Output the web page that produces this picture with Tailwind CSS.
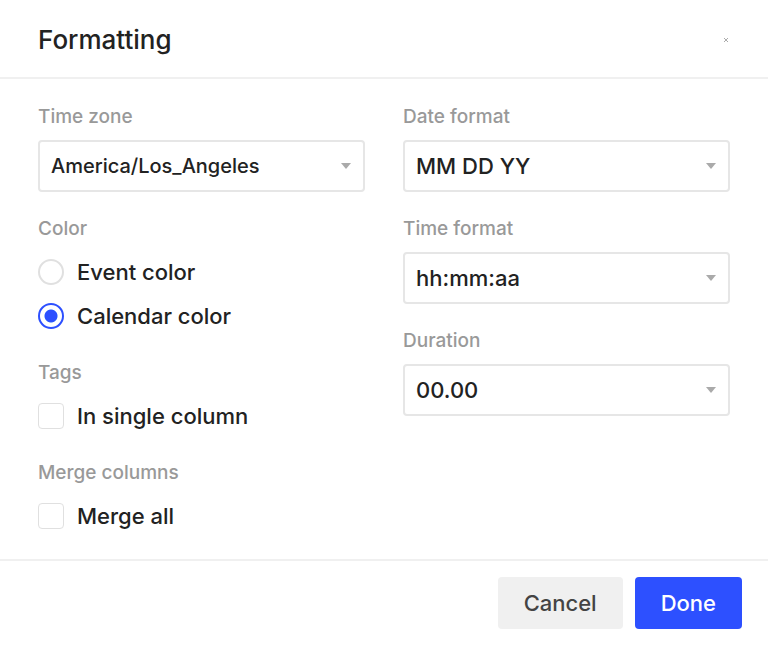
<!DOCTYPE html>
<html lang="en" class="bg-white">
<head>
  <meta charset="UTF-8" />
  <meta name="viewport" content="width=device-width, initial-scale=1" />
  <title>Formatting</title>
  <script src="https://cdn.jsdelivr.net/npm/@tailwindcss/browser@4"></script>
</head>
<body class="bg-white font-['Inter',sans-serif] font-medium text-[#222222]">

  <form id="formattingForm">
    <header class="flex items-center justify-between h-[79px] pt-[2px] px-[38px] border-b-2 border-[#f0f0f0]">
      <h1 class="text-[26px] leading-8 font-medium">Formatting</h1>
      <button type="button" aria-label="Close" class="flex items-center justify-center w-2 h-8">
        <svg class="w-2 h-2" viewBox="0 0 8 8" fill="none" stroke="#aaaaaa" stroke-width="1">
          <path d="M2 2l4 4M6 2l-4 4" />
        </svg>
      </button>
    </header>

    <div class="grid grid-cols-2 gap-[38px] px-[38px] pt-[23px] pb-[30px]">
      <div>
        <label for="timezone" class="block text-[19px] leading-[30px] text-[#999999]">Time zone</label>
        <div class="relative mt-2 mb-[22px]">
          <select id="timezone" name="timezone"
                  class="block w-full h-[52px] px-[11px] appearance-none bg-white border-2 border-[#e6e6e6] rounded-sm text-[20px]">
            <option>America/Los_Angeles</option>
          </select>
          <svg class="absolute right-[14px] top-[23px] w-[10px] h-[6px] pointer-events-none" viewBox="0 0 10 6" fill="#aaaaaa">
            <path d="M0 0h10L5 6z" />
          </svg>
        </div>

        <fieldset class="mb-[29px]">
          <legend class="text-[19px] leading-[30px] text-[#999999] mb-[15px]">Color</legend>
          <div class="space-y-[18px]">
            <label class="flex items-center gap-[13px] text-[22px] leading-[26px]">
              <input type="radio" name="color" value="event"
                     class="w-[26px] h-[26px] appearance-none rounded-full border-2 border-[#e0e0e0] checked:border-[#2d50ff] checked:bg-radial checked:from-[#2d50ff] checked:from-[6px] checked:to-white checked:to-[7px]" />
              Event color
            </label>
            <label class="flex items-center gap-[13px] text-[22px] leading-[26px]">
              <input type="radio" name="color" value="calendar" checked
                     class="w-[26px] h-[26px] appearance-none rounded-full border-2 border-[#e0e0e0] checked:border-[#2d50ff] checked:bg-radial checked:from-[#2d50ff] checked:from-[6px] checked:to-white checked:to-[7px]" />
              Calendar color
            </label>
          </div>
        </fieldset>

        <fieldset class="mb-[29px]">
          <legend class="text-[19px] leading-[30px] text-[#999999] mb-[15px]">Tags</legend>
          <label class="flex items-center gap-[13px] text-[22px] leading-[26px]">
            <input type="checkbox" name="single"
                   class="w-[26px] h-[26px] appearance-none rounded border border-[#e0e0e0] checked:bg-[#2d50ff]" />
            In single column
          </label>
        </fieldset>

        <fieldset>
          <legend class="text-[19px] leading-[30px] text-[#999999] mb-[15px]">Merge columns</legend>
          <label class="flex items-center gap-[13px] text-[22px] leading-[26px]">
            <input type="checkbox" name="merge"
                   class="w-[26px] h-[26px] appearance-none rounded border border-[#e0e0e0] checked:bg-[#2d50ff]" />
            Merge all
          </label>
        </fieldset>
      </div>

      <div>
        <label for="dateFormat" class="block text-[19px] leading-[30px] text-[#999999]">Date format</label>
        <div class="relative mt-2 mb-[22px]">
          <select id="dateFormat" name="dateFormat"
                  class="block w-full h-[52px] px-[11px] appearance-none bg-white border-2 border-[#e6e6e6] rounded-sm text-[22px]">
            <option>MM DD YY</option>
          </select>
          <svg class="absolute right-[14px] top-[23px] w-[10px] h-[6px] pointer-events-none" viewBox="0 0 10 6" fill="#aaaaaa">
            <path d="M0 0h10L5 6z" />
          </svg>
        </div>

        <label for="timeFormat" class="block text-[19px] leading-[30px] text-[#999999]">Time format</label>
        <div class="relative mt-2 mb-[22px]">
          <select id="timeFormat" name="timeFormat"
                  class="block w-full h-[52px] px-[11px] appearance-none bg-white border-2 border-[#e6e6e6] rounded-sm text-[22px]">
            <option>hh:mm:aa</option>
          </select>
          <svg class="absolute right-[14px] top-[23px] w-[10px] h-[6px] pointer-events-none" viewBox="0 0 10 6" fill="#aaaaaa">
            <path d="M0 0h10L5 6z" />
          </svg>
        </div>

        <label for="duration" class="block text-[19px] leading-[30px] text-[#999999]">Duration</label>
        <div class="relative mt-2">
          <select id="duration" name="duration"
                  class="block w-full h-[52px] px-[11px] appearance-none bg-white border-2 border-[#e6e6e6] rounded-sm text-[22px]">
            <option>00.00</option>
          </select>
          <svg class="absolute right-[14px] top-[23px] w-[10px] h-[6px] pointer-events-none" viewBox="0 0 10 6" fill="#aaaaaa">
            <path d="M0 0h10L5 6z" />
          </svg>
        </div>
      </div>
    </div>

    <footer class="flex justify-end gap-3 px-[26px] py-4 border-t-2 border-[#f0f0f0]">
      <button type="button" class="h-[52px] px-[26px] rounded-sm bg-[#f0f0f0] text-[22px] text-[#444444]">Cancel</button>
      <button type="submit" class="h-[52px] px-[26px] rounded-sm bg-[#2d50ff] text-[22px] text-white">Done</button>
    </footer>
  </form>

</body>
</html>
